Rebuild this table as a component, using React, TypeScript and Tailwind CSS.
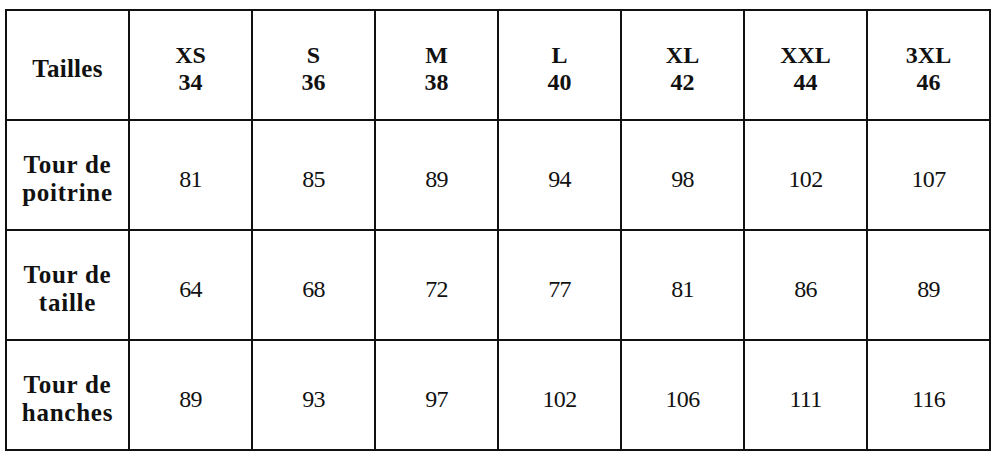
import React from 'react';

const sizes = [
  ['XS', '34'],
  ['S', '36'],
  ['M', '38'],
  ['L', '40'],
  ['XL', '42'],
  ['XXL', '44'],
  ['3XL', '46'],
];

const rows = [
  { label: ['Tour de', 'poitrine'], values: [81, 85, 89, 94, 98, 102, 107] },
  { label: ['Tour de', 'taille'], values: [64, 68, 72, 77, 81, 86, 89] },
  { label: ['Tour de', 'hanches'], values: [89, 93, 97, 102, 106, 111, 116] },
];

const cell = 'flex flex-col items-center justify-center bg-white pt-2 text-center';

export default function App() {
  return (
    <div className="h-[460px] w-[1000px] bg-white pl-[5px] pt-[9px] font-['Liberation_Serif',serif] text-[#111]">
      <div className="grid w-[986px] grid-cols-[repeat(8,121px)] grid-rows-[repeat(4,108px)] gap-[2px] bg-[#111] p-[2px]">
        <div className={`${cell} text-[25px] font-bold leading-[28px] tracking-[0.01em]`}>Tailles</div>
        {sizes.map(([s, n]) => (
          <div key={s} className={`${cell} text-[24px] font-bold leading-[27px]`}>
            <span>{s}</span>
            <span>{n}</span>
          </div>
        ))}
        {rows.map((row) => (
          <React.Fragment key={row.label[1]}>
            <div className={`${cell} text-[25px] font-bold leading-[28px] tracking-[0.03em]`}>
              <span>{row.label[0]}</span>
              <span>{row.label[1]}</span>
            </div>
            {row.values.map((v, i) => (
              <div key={i} className={`${cell} text-[24px] tracking-[-0.03em]`}>
                {v}
              </div>
            ))}
          </React.Fragment>
        ))}
      </div>
    </div>
  );
}
